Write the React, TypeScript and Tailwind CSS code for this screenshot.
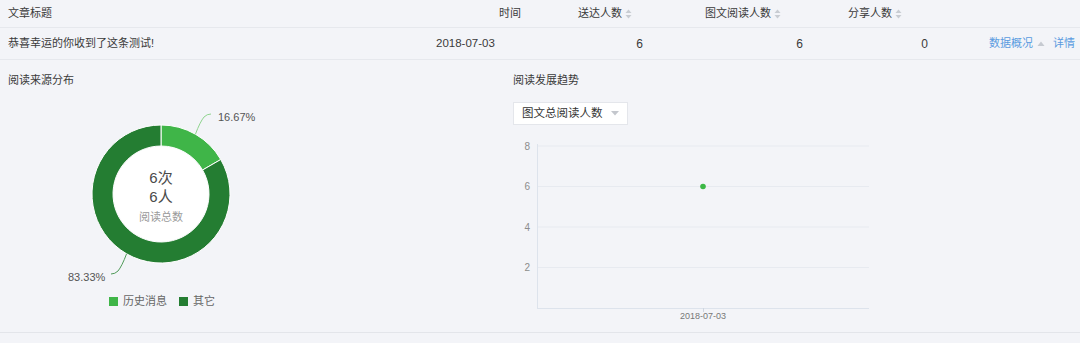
import React from "react";

const font = { fontFamily: '"Liberation Sans", "Noto Sans CJK SC", sans-serif' };

function SortIcon() {
  return (
    <svg width="7" height="10" viewBox="0 0 7 10" className="ml-[3px]">
      <path d="M3.5 0.5 L6.5 4 L0.5 4 Z" fill="#c9ccd2" />
      <path d="M3.5 9.5 L6.5 6 L0.5 6 Z" fill="#c9ccd2" />
    </svg>
  );
}

function arc(cx: number, cy: number, r: number, R: number, a0: number, a1: number) {
  const p = (rad: number, a: number) => {
    const t = (a * Math.PI) / 180;
    return [cx + rad * Math.sin(t), cy - rad * Math.cos(t)];
  };
  const large = a1 - a0 > 180 ? 1 : 0;
  const [x0, y0] = p(R, a0);
  const [x1, y1] = p(R, a1);
  const [x2, y2] = p(r, a1);
  const [x3, y3] = p(r, a0);
  return `M${x0} ${y0} A${R} ${R} 0 ${large} 1 ${x1} ${y1} L${x2} ${y2} A${r} ${r} 0 ${large} 0 ${x3} ${y3} Z`;
}

function Donut() {
  const cx = 161;
  const cy = 94;
  return (
    <svg width="300" height="190" viewBox="0 0 300 190" className="block">
      <path d={arc(cx, cy, 48, 69, 0, 60)} fill="#3fb548" stroke="#ffffff" strokeWidth="1" />
      <path d={arc(cx, cy, 48, 69, 60, 360)} fill="#247d32" stroke="#ffffff" strokeWidth="1" />
      <circle cx={cx} cy={cy} r="47.5" fill="#ffffff" />
      <path d="M195.5 34 Q200 22 204 17 Q207 14 211 14" fill="none" stroke="#8fd48f" strokeWidth="1" />
      <path d="M126.5 154 Q122 166 118 171 Q115 174 111 174" fill="none" stroke="#4f9a59" strokeWidth="1" />
      <text x="218" y="21" fontSize="11" fill="#555" style={font}>16.67%</text>
      <text x="68" y="181" fontSize="11" fill="#555" style={font}>83.33%</text>
      <text x={cx} y="83" textAnchor="middle" fontSize="15" fill="#4a4a4a" style={font}>6次</text>
      <text x={cx} y="102" textAnchor="middle" fontSize="15" fill="#4a4a4a" style={font}>6人</text>
      <text x={cx} y="121" textAnchor="middle" fontSize="11" fill="#9a9a9a" style={font}>阅读总数</text>
    </svg>
  );
}

function LineChart() {
  const grid = [11, 51.5, 92, 132.5];
  const labels = ["8", "6", "4", "2"];
  return (
    <svg width="375" height="190" viewBox="0 0 375 190" className="block">
      {grid.map((y, i) => (
        <g key={i}>
          <line x1="32" x2="364" y1={y} y2={y} stroke="#e7eaf0" strokeWidth="1" />
          <text x="25" y={y + 3.5} textAnchor="end" fontSize="10" fill="#8c8c8c" style={font}>
            {labels[i]}
          </text>
        </g>
      ))}
      <line x1="32.5" x2="32.5" y1="9" y2="173" stroke="#dde3ec" strokeWidth="1" />
      <line x1="32" x2="364" y1="173.5" y2="173.5" stroke="#dde3ec" strokeWidth="1" />
      <line x1="198.5" x2="198.5" y1="173" y2="177" stroke="#cfd6e0" strokeWidth="1" />
      <circle cx="198" cy="51.5" r="2.8" fill="#3cb846" />
      <text x="198" y="184" textAnchor="middle" fontSize="9" fill="#777" style={font}>2018-07-03</text>
    </svg>
  );
}

export default function App() {
  return (
    <div className="w-[1080px] h-[343px] bg-[#f3f4f8] text-[11px] text-[#3a3a3a] overflow-hidden" style={font}>
      <div className="h-[28px] border-b border-[#e6e8ed] flex items-center">
        <div className="w-[499px] pl-2">文章标题</div>
        <div className="w-[79px]">时间</div>
        <div className="w-[127px] flex items-center">送达人数<SortIcon /></div>
        <div className="w-[143px] flex items-center">图文阅读人数<SortIcon /></div>
        <div className="flex items-center">分享人数<SortIcon /></div>
      </div>
      <div className="h-[32px] border-b border-[#e6e8ed] flex items-center">
        <div className="w-[436px] pl-2 whitespace-nowrap">恭喜幸运的你收到了这条测试!</div>
        <div className="w-[60px] text-[11.5px] whitespace-nowrap">2018-07-03</div>
        <div className="w-[147px] text-[12px] text-right">6</div>
        <div className="w-[160px] text-[12px] text-right">6</div>
        <div className="w-[125px] text-[12px] text-right">0</div>
        <div className="flex-1 flex items-center justify-end pr-[5px] text-[#5a9be0] whitespace-nowrap">
          <span>数据概况</span>
          <svg width="8" height="6" viewBox="0 0 8 6" className="ml-[4px] mr-[8px]">
            <path d="M4 0.5 L7.5 5 L0.5 5 Z" fill="#c6cad1" />
          </svg>
          <span>详情</span>
        </div>
      </div>
      <div className="h-[273px] border-b border-[#e3e5ea] flex">
        <div className="w-[505px] flex flex-col">
          <div className="pl-2 pt-[13px] leading-[14px]">阅读来源分布</div>
          <div className="mt-[13px]">
            <Donut />
          </div>
          <div className="flex items-center ml-[109px] mt-[3px] text-[#666]">
            <span className="w-[9px] h-[9px] bg-[#3fb548]" />
            <span className="ml-[5px]">历史消息</span>
            <span className="w-[9px] h-[9px] bg-[#247d32] ml-[12px]" />
            <span className="ml-[5px]">其它</span>
          </div>
        </div>
        <div className="flex-1 flex flex-col">
          <div className="pl-2 pt-[13px] leading-[14px]">阅读发展趋势</div>
          <div className="ml-2 mt-[15px] w-[115px] h-[23px] bg-white border border-[#e4e6eb] flex items-center justify-between pl-[8px] pr-[8px] text-[11.5px] text-[#333]">
            <span>图文总阅读人数</span>
            <svg width="8" height="5" viewBox="0 0 8 5">
              <path d="M0 0 L8 0 L4 4.5 Z" fill="#c4c7cd" />
            </svg>
          </div>
          <div className="mt-[10px]">
            <LineChart />
          </div>
        </div>
      </div>
    </div>
  );
}
